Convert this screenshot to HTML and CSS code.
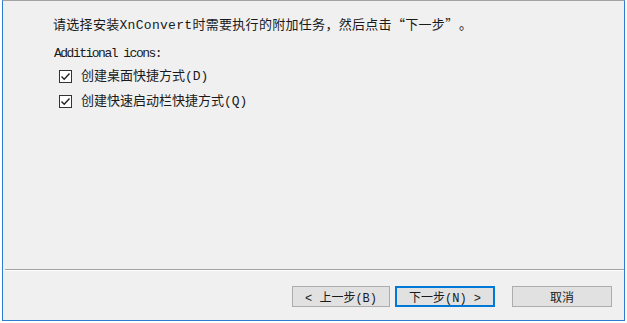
FILE: index.html
```html
<!DOCTYPE html>
<html>
<head>
<meta charset="utf-8">
<link rel="stylesheet" href="styles.css">
</head>
<body>
<div class="window">
  <div class="content">
    <p class="intro">请选择安装XnConvert时需要执行的附加任务，然后点击<span class="cjk">“</span>下一步<span class="cjk close">”</span>。</p>
    <p class="group">Additional icons:</p>
    <label class="check"><span class="box"><svg width="11" height="11" viewBox="0 0 11 11"><path d="M1.5 5.5 L4.2 8.2 L9.5 2.5" fill="none" stroke="#222" stroke-width="1.4"/></svg></span>创建桌面快捷方式(D)</label>
    <label class="check"><span class="box"><svg width="11" height="11" viewBox="0 0 11 11"><path d="M1.5 5.5 L4.2 8.2 L9.5 2.5" fill="none" stroke="#222" stroke-width="1.4"/></svg></span>创建快速启动栏快捷方式(Q)</label>
  </div>
  <div class="sep"></div>
  <div class="footer">
    <button class="btn back">&lt; 上一步(B)</button>
    <button class="btn next">下一步(N) &gt;</button>
    <button class="btn cancel">取消</button>
  </div>
</div>
</body>
</html>
```
FILE: styles.css
```css
html, body {
  margin: 0;
  padding: 0;
  background: #ffffff;
}
body {
  font-family: "Liberation Mono", "Noto Sans CJK SC", monospace;
  font-size: 13px;
  color: #1a1a1a;
}
.window {
  margin-left: 2px;
  width: 623px;
  height: 321px;
  box-sizing: border-box;
  border: 1px solid #2d7dd2;
  border-top-color: #a3a3a3;
  background: #f0f0f0;
  display: flex;
  flex-direction: column;
}
.content {
  height: 268px;
  box-sizing: border-box;
  padding: 14px 0 0 50px;
  display: flex;
  flex-direction: column;
}
.intro {
  margin: 0;
  line-height: 18px;
  height: 18px;
  letter-spacing: 0.3px;
}
.cjk {
  font-family: "Noto Sans CJK SC", sans-serif;
}
.close {
  margin-right: 7px;
}
.group {
  margin: 12px 0 0 1px;
  line-height: 18px;
  letter-spacing: -1.5px;
}
.check {
  display: flex;
  align-items: center;
  margin-left: 6px;
  height: 25px;
  line-height: 18px;
}
.check:first-of-type {
  margin-top: 1px;
}
.box {
  width: 13px;
  height: 13px;
  box-sizing: border-box;
  border: 1px solid #333;
  background: #fff;
  display: flex;
  align-items: center;
  justify-content: center;
  margin-right: 9px;
}
.sep {
  margin-left: 2px;
  border-top: 1px solid #a0a0a0;
  border-bottom: 1px solid #ffffff;
}
.footer {
  display: flex;
  justify-content: flex-end;
  align-items: flex-start;
  padding: 15px 12px 0 0;
}
.btn {
  font-family: "Liberation Mono", "Noto Sans CJK SC", monospace;
  font-size: 12px;
  color: #1a1a1a;
  height: 21px;
  width: 100px;
  padding: 0;
  box-sizing: border-box;
  background: #e1e1e1;
  border: 1px solid #adadad;
  border-radius: 0;
}
.back {
  width: 98px;
}
.next {
  margin-left: 5px;
  border: 2px solid #0078d7;
}
.cancel {
  margin-left: 17px;
}
```
